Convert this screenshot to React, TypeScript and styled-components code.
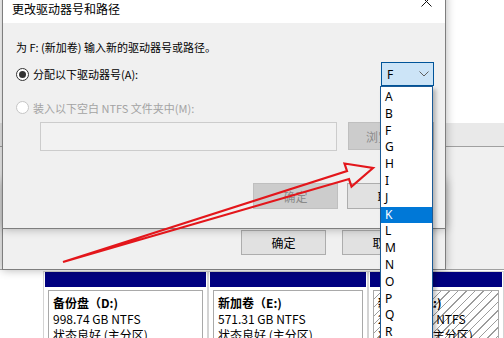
import React from 'react';
import styled, { createGlobalStyle } from 'styled-components';

const GlobalStyle = createGlobalStyle`
  html, body {
    margin: 0;
    padding: 0;
    background: #ffffff;
  }
  body {
    font-family: "Noto Sans", "Noto Sans CJK SC", sans-serif;
    font-size: 12px;
    color: #000000;
  }
`;

const CJK = `"Noto Sans CJK SC", "Noto Sans", sans-serif`;

const Desktop = styled.div`
  position: relative;
  width: 504px;
  height: 338px;
  overflow: hidden;
  background: #f0f0f0;
`;

/* ---------- disk management window behind ---------- */

const ListArea = styled.div`
  height: 123px;
  background: #ffffff;
`;

const Splitter = styled.div`
  height: 23px;
  background: #e9e9e9;
  border-bottom: 1px solid #a0a0a0;
`;

const GraphicArea = styled.div`
  height: 122px;
  background: #f0f0f0;
  border-bottom: 1px solid #a0a0a0;
`;

const DiskRow = styled.div`
  display: flex;
  align-items: flex-start;
  height: 68px;
  background: #ffffff;
`;

const DiskLabel = styled.div`
  width: 43px;
  flex-shrink: 0;
`;

const DiskBlock = styled.div<{ $w?: number }>`
  box-sizing: border-box;
  margin-top: 1px;
  width: ${({ $w }) => ($w ? `${$w}px` : 'auto')};
  flex: ${({ $w }) => ($w ? '0 0 auto' : '1 1 auto')};
  height: 80px;
  border: 1px solid #d4d4d4;
  border-bottom: none;
  padding: 0 1px;
  display: flex;
  flex-direction: column;
`;

const NavyBar = styled.div`
  height: 15px;
  background: #000080;
`;

const PartBox = styled.div<{ $hatched?: boolean }>`
  margin: 3px 3px 0;
  border: 1px solid #a9a9a9;
  border-bottom: none;
  padding: 4px 4px 0;
  flex: 1;
  font-family: ${CJK};
  font-size: 12px;
  line-height: 16px;
  white-space: nowrap;
  overflow: hidden;
  background: ${({ $hatched }) =>
    $hatched
      ? 'repeating-linear-gradient(135deg, #ffffff 0 5px, #9c9c9c 5px 6px)'
      : '#ffffff'};
`;

const PartName = styled.div`
  font-weight: 700;
`;

/* ---------- dialogs ---------- */

const Dialog = styled.div<{ $top: number; $height: number }>`
  position: absolute;
  left: 2px;
  top: ${({ $top }) => $top}px;
  width: 444px;
  height: ${({ $height }) => $height}px;
  box-sizing: border-box;
  background: #f0f0f0;
  border: 1px solid #7e7e7e;
  box-shadow: 0 0 9px rgba(0, 0, 0, 0.3);
  display: flex;
  flex-direction: column;
  font-family: ${CJK};
  font-size: 11px;
`;

const TitleBar = styled.div`
  height: 30px;
  flex-shrink: 0;
  background: #ffffff;
  display: flex;
  align-items: flex-end;
  justify-content: space-between;
  padding: 0 9px 6px 9px;
  box-sizing: border-box;
`;

const Title = styled.span`
  font-size: 12px;
  line-height: 17px;
  color: #000000;
`;

const CloseGlyph = styled.svg`
  width: 11px;
  height: 11px;
  margin: 0 4px 10px 0;
`;

const DialogBody = styled.div`
  display: flex;
  flex-direction: column;
  padding: 16px 11px 0 13px;
`;

const Prompt = styled.div`
  line-height: 17px;
`;

const OptionRow = styled.div<{ $gap: number; $h: number }>`
  margin-top: ${({ $gap }) => $gap}px;
  height: ${({ $h }) => $h}px;
  display: flex;
  align-items: center;
  justify-content: space-between;
`;

const RadioLabel = styled.label<{ $disabled?: boolean }>`
  display: flex;
  align-items: center;
  gap: 4px;
  color: ${({ $disabled }) => ($disabled ? '#a3a3a3' : '#000000')};
`;

const Radio = styled.span<{ $checked?: boolean; $disabled?: boolean }>`
  width: 13px;
  height: 13px;
  box-sizing: border-box;
  border-radius: 50%;
  border: 1px solid ${({ $disabled }) => ($disabled ? '#c6c6c6' : '#333333')};
  display: flex;
  align-items: center;
  justify-content: center;
  background: #ffffff;
  &::after {
    content: '';
    width: 7px;
    height: 7px;
    border-radius: 50%;
    background: ${({ $checked }) => ($checked ? '#333333' : 'transparent')};
  }
`;

const Combo = styled.div`
  width: 53px;
  height: 24px;
  box-sizing: border-box;
  background: #cce4f7;
  border: 1px solid #005499;
  display: flex;
  align-items: center;
  justify-content: space-between;
  padding: 0 4px 0 5px;
  font-family: "Noto Sans", sans-serif;
  font-size: 12px;
`;

const PathRow = styled.div`
  margin-top: 6px;
  padding-left: 24px;
  display: flex;
  align-items: flex-start;
  gap: 11px;
`;

const PathBox = styled.div`
  width: 298px;
  height: 29px;
  box-sizing: border-box;
  border: 1px solid #cccccc;
  background: #f2f2f2;
`;

const Button = styled.div<{ $disabled?: boolean; $w?: number; $h?: number }>`
  width: ${({ $w }) => $w ?? 85}px;
  height: ${({ $h }) => $h ?? 26}px;
  box-sizing: border-box;
  display: flex;
  align-items: center;
  justify-content: center;
  background: ${({ $disabled }) => ($disabled ? '#cccccc' : '#e1e1e1')};
  border: 1px solid ${({ $disabled }) => ($disabled ? '#bfbfbf' : '#adadad')};
  color: ${({ $disabled }) => ($disabled ? '#8a8a8a' : '#000000')};
  font-size: 12px;
  white-space: nowrap;
`;

const ButtonRow = styled.div`
  margin-top: 32px;
  padding-right: 2px;
  display: flex;
  justify-content: flex-end;
  gap: 9px;
`;

const BackButtons = styled.div`
  margin-top: auto;
  padding: 0 18px 14px 0;
  display: flex;
  justify-content: flex-end;
  gap: 16px;
`;

/* ---------- drop down list ---------- */

const DropList = styled.ul`
  position: absolute;
  left: 380px;
  top: 86px;
  width: 53px;
  height: 270px;
  box-sizing: border-box;
  margin: 0;
  padding: 2px 0 0;
  list-style: none;
  background: #ffffff;
  border: 1px solid #1b5a96;
  box-shadow: 3px 3px 4px rgba(0, 0, 0, 0.25);
  font-family: "Noto Sans", sans-serif;
  font-size: 12px;
`;

const DropItem = styled.li<{ $active?: boolean }>`
  height: 16.8px;
  line-height: 16.8px;
  padding-left: 4px;
  background: ${({ $active }) => ($active ? '#0078d7' : 'transparent')};
  color: ${({ $active }) => ($active ? '#ffffff' : '#000000')};
`;

const ArrowLayer = styled.svg`
  position: absolute;
  left: 0;
  top: 0;
  width: 504px;
  height: 338px;
  pointer-events: none;
`;

const letters = ['A', 'B', 'F', 'G', 'H', 'I', 'J', 'K', 'L', 'M', 'N', 'O', 'P', 'Q', 'R', 'S'];

const partitions = [
  { w: 165, name: '备份盘（D:)', size: '998.74 GB NTFS' },
  { w: 160, name: '新加卷（E:)', size: '571.31 GB NTFS' },
];

export default function App() {
  return (
    <>
      <GlobalStyle />
      <Desktop>
        <ListArea />
        <Splitter />
        <GraphicArea />
        <DiskRow>
          <DiskLabel />
          {partitions.map((p) => (
            <DiskBlock key={p.name} $w={p.w}>
              <NavyBar />
              <PartBox>
                <PartName>{p.name}</PartName>
                <div>{p.size}</div>
                <div>状态良好 (主分区)</div>
              </PartBox>
            </DiskBlock>
          ))}
          <DiskBlock>
            <NavyBar />
            <PartBox $hatched>
              <PartName>新加卷（F:)</PartName>
              <div>283.32 GB NTFS</div>
              <div>状态良好 (主分区)</div>
            </PartBox>
          </DiskBlock>
        </DiskRow>

        <Dialog $top={180} $height={90}>
          <BackButtons>
            <Button $h={25}>确定</Button>
            <Button $h={25}>取消</Button>
          </BackButtons>
        </Dialog>

        <Dialog $top={-8} $height={237}>
          <TitleBar>
            <Title>更改驱动器号和路径</Title>
            <CloseGlyph viewBox="0 0 11 11">
              <path d="M0.5 0.5 L10.5 10.5 M10.5 0.5 L0.5 10.5" stroke="#111" strokeWidth="1" fill="none" />
            </CloseGlyph>
          </TitleBar>
          <DialogBody>
            <Prompt>为 F: (新加卷) 输入新的驱动器号或路径。</Prompt>
            <OptionRow $gap={6} $h={24}>
              <RadioLabel>
                <Radio $checked />
                分配以下驱动器号(A):
              </RadioLabel>
              <Combo>
                <span>F</span>
                <svg width="10" height="6" viewBox="0 0 10 6">
                  <path d="M0.5 0.5 L5 5 L9.5 0.5" stroke="#606060" strokeWidth="1" fill="none" />
                </svg>
              </Combo>
            </OptionRow>
            <OptionRow $gap={13} $h={17}>
              <RadioLabel $disabled>
                <Radio $disabled />
                装入以下空白 NTFS 文件夹中(M):
              </RadioLabel>
            </OptionRow>
            <PathRow>
              <PathBox />
              <Button $disabled $w={86} $h={28}>浏览(B)...</Button>
            </PathRow>
            <ButtonRow>
              <Button $disabled>确定</Button>
              <Button>取消</Button>
            </ButtonRow>
          </DialogBody>
        </Dialog>

        <ArrowLayer viewBox="0 0 504 338">
          <polygon
            points="63,262 347,171 344.5,163.5 373,168 351.5,186.5 349,179"
            fill="none"
            stroke="#e3161b"
            strokeWidth="2.2"
            strokeLinejoin="miter"
          />
        </ArrowLayer>

        <DropList>
          {letters.map((l) => (
            <DropItem key={l} $active={l === 'K'}>
              {l}
            </DropItem>
          ))}
        </DropList>
      </Desktop>
    </>
  );
}
